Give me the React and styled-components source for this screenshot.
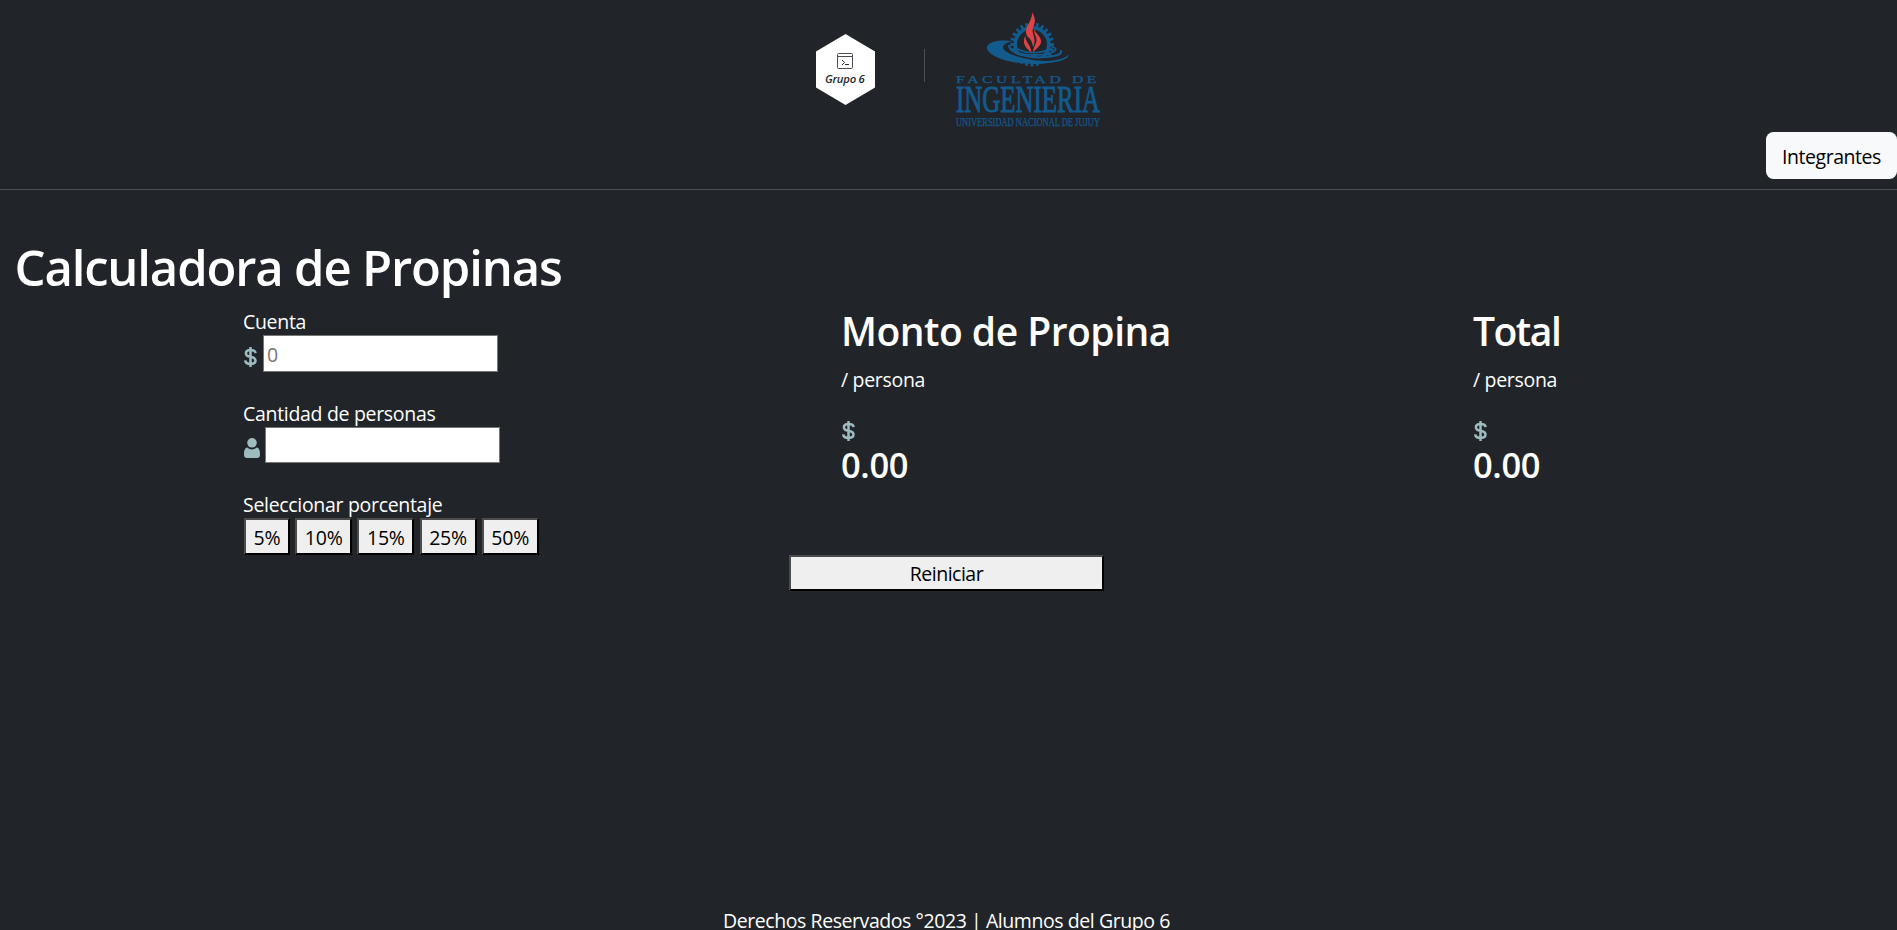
import React from "react";
import styled, { createGlobalStyle } from "styled-components";

const GlobalStyle = createGlobalStyle`
  *, *::before, *::after { box-sizing: border-box; }
  body {
    margin: 0;
    background: #212529;
    color: #fff;
    font-family: "Open Sans", "Noto Sans", sans-serif;
    font-size: 19.5px;
    line-height: 29px;
    overflow: hidden;
  }
  h1, h2, h3, p { margin: 0; }
  button, input { font: inherit; margin: 0; border-radius: 0; }
`;

const Page = styled.div`
  display: flex;
  flex-direction: column;
  height: 930px;
`;

const Header = styled.header`
  height: 190px;
  border-bottom: 1px solid #495057;
  display: flex;
  flex-direction: column;
`;

const Logos = styled.div`
  display: flex;
  height: 132px;
  padding-left: 816px;
`;

const GroupLogo = styled.svg`
  display: block;
  width: 59px;
  height: 72px;
  margin-top: 34px;
`;

const Divider = styled.span`
  width: 1px;
  height: 33px;
  margin: 49px 30px 0 49px;
  background: #495057;
`;

const FacultyLogo = styled.svg`
  display: block;
  width: 146px;
  height: 120px;
  margin-top: 10px;
`;

const MembersButton = styled.button`
  align-self: flex-end;
  width: 131px;
  height: 47px;
  padding: 2px 0 0;
  border: 0;
  border-radius: 7.5px;
  background: #f8f9fa;
  color: #000;
  letter-spacing: -0.45px;
`;

const Title = styled.h1`
  margin: 47px 0 0 14.5px;
  height: 69px;
  font-size: 49px;
  line-height: 60px;
  font-weight: 650;
  white-space: nowrap;
  letter-spacing: -1.15px;
`;

const Columns = styled.main`
  display: grid;
  grid-template-columns: 598px 632px 1fr;
  height: 249px;
  padding-left: 243px;
`;

const Field = styled.div`
  height: ${(p) => p.$height}px;
`;

const Text = styled.span`
  display: block;
  padding-top: 1px;
  margin-bottom: -1px;
  white-space: nowrap;
  letter-spacing: ${(p) => p.$track ?? -0.31}px;
`;

const InputRow = styled.div`
  display: flex;
  gap: ${(p) => p.$gap}px;
`;

const Input = styled.input`
  width: 235px;
  height: ${(p) => p.$height}px;
  padding: 2px 3px 1px;
  border: 1px solid #767676;
  background: #fff;
  outline: none;
  &::placeholder { color: #757575; opacity: 1; }
`;

const DollarSvg = styled.svg`
  display: block;
  flex: none;
  width: 13px;
  height: 20px;
  margin: ${(p) => p.$top}px 0 0 1px;
  fill: none;
  stroke: #9dbcc0;
  stroke-width: 2.5;
`;

const Dollar = ({ top }) => (
  <DollarSvg viewBox="0 0 13 20" $top={top}>
    <path d="M11.6 6.2C11.4 4.3 9.500 3.100 6.600 3.100C3.700 3.100 1.900 4.400 1.900 6.400C1.900 8.500 3.600 9.200 6.600 9.800C9.800 10.400 11.500 11.300 11.500 13.500C11.500 15.700 9.500 16.900 6.600 16.900C3.500 16.900 1.400 15.600 1.200 13.400M6.500 0V20" />
  </DollarSvg>
);

const PersonSvg = styled.svg`
  display: block;
  flex: none;
  width: 16px;
  height: 20px;
  margin: 11px 0 0 1px;
  fill: #9dbcc0;
`;

const Percentages = styled.div`
  display: flex;
  gap: 5.2px;
  padding-left: 1px;
`;

const RaisedButton = styled.button`
  width: ${(p) => p.$width}px;
  height: ${(p) => p.$height}px;
  padding: 1px 0 0;
  border: 2px solid;
  border-color: #4c4c4c #000 #000 #4c4c4c;
  background: #efefef;
  color: #000;
  letter-spacing: ${(p) => p.$track ?? -0.5}px;
`;

const Result = styled.section`
  display: flex;
  flex-direction: column;
`;

const ResultTitle = styled.h2`
  padding-top: 1px;
  margin-bottom: 9px;
  font-size: 39px;
  line-height: 48px;
  font-weight: 600;
  white-space: nowrap;
  letter-spacing: ${(p) => p.$track}px;
`;

const Amount = styled.h3`
  margin-top: 3px;
  font-size: 34.5px;
  line-height: 42px;
  font-weight: 600;
  letter-spacing: -0.4px;
`;

const ResetRow = styled.div`
  padding-left: 789px;
`;

const Footer = styled.footer`
  margin-top: auto;
  padding-left: 723px;
  height: 25px;
`;

const teeth = Array.from({ length: 24 }, (_, i) => i * 15);
const percentages = ["5%", "10%", "15%", "25%", "50%"];
const results = [
  { title: "Monto de Propina", track: -0.5 },
  { title: "Total", track: -1.5 },
];

export default function App() {
  return (
    <Page>
      <GlobalStyle />
      <Header>
        <Logos>
          <GroupLogo viewBox="0 0 59 72">
            <path d="M29.500 0L59 17.500V53.500L29.500 71L0 53.500V17.500Z" fill="#fff" />
            <g fill="none" stroke="#4a4e54" strokeWidth="1">
              <rect x="21.500" y="19.500" width="15" height="15" rx="1" />
              <path d="M21.500 22.500H36.500" />
              <path d="M26 26L28.500 28.500L26 31M29 30.500H33" stroke="#24272b" />
            </g>
            <text x="9" y="49" fontFamily="Open Sans, sans-serif" fontSize="11.300" fontWeight="600" fontStyle="italic" fill="#24272b" letterSpacing="-0.25">Grupo 6</text>
          </GroupLogo>
          <Divider />
          <FacultyLogo viewBox="955 10 146 120">
            <g fill="none" stroke="#135a8d">
              <circle cx="1032" cy="44.500" r="16.800" strokeWidth="3.600" />
              {teeth.map((a) => (
                <path key={a} d="M1032 28V22.500" strokeWidth="2.700" transform={`rotate(${a} 1032 44.5)`} />
              ))}
            </g>
            <path d="M1005 45C1010 56 1040 63 1064 53L1068 55C1062 66 1005 65 1000 50Z" fill="#212529" />
            <path d="M1013 41.500C1000 39 986 42 987 48.500C990 59 1021 66 1043 63.500C1057 62.500 1069 60 1068.500 54.500C1064 60 1050 62 1036 60.500C1018 58 1005 53 1003 48C1003 44 1007 42 1013 41.500Z" fill="#135a8d" />
            <g fill="none" stroke="#135a8d" strokeLinecap="round">
              <path d="M1009 46C1011 54 1029 58.500 1045 57C1054 56.500 1062 55 1061 51" strokeWidth="2.200" />
              <path d="M1017 52C1024 56 1044 56 1053 52C1058 49 1055 47.500 1051 46.500" strokeWidth="1.800" />
              <path d="M1018 49C1025 53.500 1040 54 1048 49.500" strokeWidth="1.500" />
            </g>
            <g fill="#e04346">
              <path d="M1032.200 12.500C1035.500 18 1035.500 22 1033.500 26.500C1031 32 1034.500 35 1034.500 40C1034.500 43 1034 45 1033 47C1032.500 42 1030.500 39 1027.500 36.500C1024 31 1027.500 26 1029.500 22C1031 19 1032 16 1032.200 12.500Z" />
              <path d="M1034.500 29.500C1036 34 1041.500 37 1041 42C1040.500 47 1034.500 49 1033.500 53C1032.500 48 1036.500 44 1036.500 40C1036.500 36 1033.500 34 1034.500 29.500Z" />
              <path d="M1025.500 35.500C1024.500 41 1030.500 44 1031.500 52.500C1027 49 1023.500 45 1024 41C1024 39 1024.500 37 1025.500 35.500Z" />
            </g>
            <g fontFamily="Liberation Serif, serif" fill="#135a8d" stroke="#135a8d">
              <text x="956" y="82.500" fontSize="11" textLength="144" lengthAdjust="spacingAndGlyphs" letterSpacing="2.500" strokeWidth=".25">FACULTAD DE</text>
              <text x="956" y="112" fontSize="37" textLength="144" lengthAdjust="spacingAndGlyphs" strokeWidth="1">INGENIERIA</text>
              <text x="956" y="125.500" fontSize="11.500" textLength="144" lengthAdjust="spacingAndGlyphs" strokeWidth=".25">UNIVERSIDAD NACIONAL DE JUJUY</text>
            </g>
          </FacultyLogo>
        </Logos>
        <MembersButton>Integrantes</MembersButton>
      </Header>
      <Title>Calculadora de Propinas</Title>
      <Columns>
        <div>
          <Field $height={92}>
            <Text as="label">Cuenta</Text>
            <InputRow $gap={6}>
              <Dollar top={12} />
              <Input $height={37} placeholder="0" />
            </InputRow>
          </Field>
          <Field $height={91}>
            <Text as="label">Cantidad de personas</Text>
            <InputRow $gap={5}>
              <PersonSvg viewBox="0 0 16 20">
                <circle cx="8" cy="4.800" r="4.800" />
                <path d="M3.500 9.500C5.500 12 10.500 12 12.500 9.500C15.500 10 16 13 16 16.500Q16 20 13 20H3Q0 20 0 16.500C0 13 .5 10 3.500 9.500Z" />
              </PersonSvg>
              <Input $height={36} />
            </InputRow>
          </Field>
          <Field $height={66}>
            <Text>Seleccionar porcentaje</Text>
            <Percentages>
              {percentages.map((p) => (
                <RaisedButton key={p} $width={p === "5%" ? 46 : 57} $height={37} $track={-0.2}>{p}</RaisedButton>
              ))}
            </Percentages>
          </Field>
        </div>
        {results.map(({ title, track }) => (
          <Result key={title}>
            <ResultTitle $track={track}>{title}</ResultTitle>
            <Text>/ persona</Text>
            <Dollar top={28} />
            <Amount>0.00</Amount>
          </Result>
        ))}
      </Columns>
      <ResetRow>
        <RaisedButton $width={315} $height={36}>Reiniciar</RaisedButton>
      </ResetRow>
      <Footer>
        <Text $track={-0.43}>Derechos Reservados °2023 | Alumnos del Grupo 6</Text>
      </Footer>
    </Page>
  );
}
